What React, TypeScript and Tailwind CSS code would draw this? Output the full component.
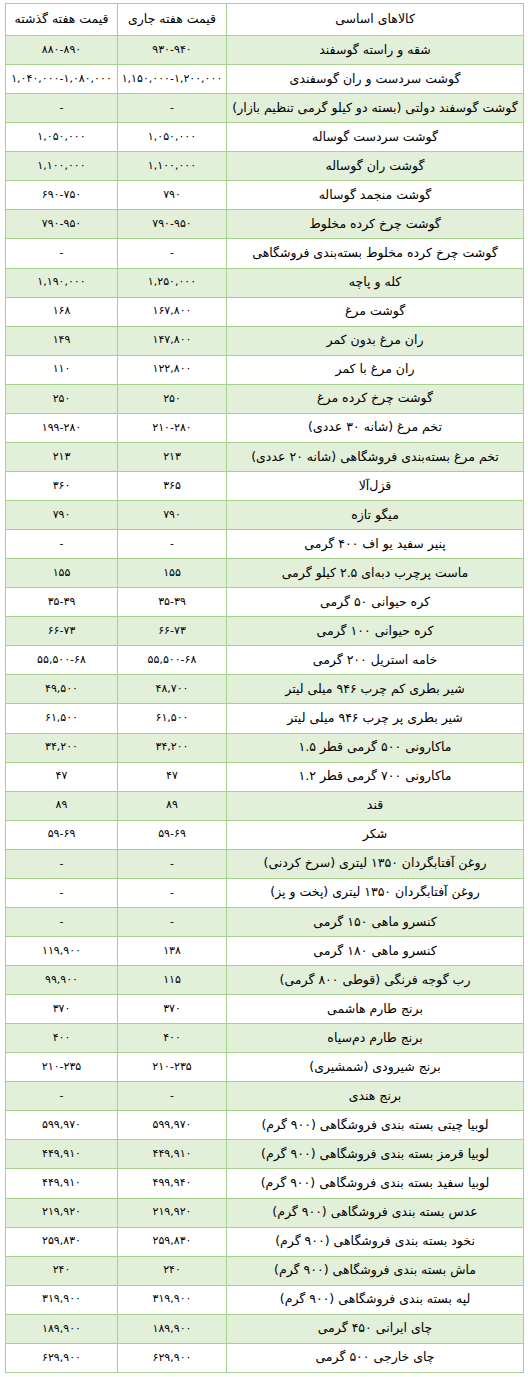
import React from "react";

const rows: [string, string, string][] = [
  ["شقه و راسته گوسفند", "۹۳۰-۹۴۰", "۸۸۰-۸۹۰"],
  ["گوشت سردست و ران گوسفندی", "۱,۱۵۰,۰۰۰-۱,۲۰۰,۰۰۰", "۱,۰۴۰,۰۰۰-۱,۰۸۰,۰۰۰"],
  ["گوشت گوسفند دولتی (بسته دو کیلو گرمی تنظیم بازار)", "-", "-"],
  ["گوشت سردست گوساله", "۱,۰۵۰,۰۰۰", "۱,۰۵۰,۰۰۰"],
  ["گوشت ران گوساله", "۱,۱۰۰,۰۰۰", "۱,۱۰۰,۰۰۰"],
  ["گوشت منجمد گوساله", "۷۹۰", "۶۹۰-۷۵۰"],
  ["گوشت چرخ کرده مخلوط", "۷۹۰-۹۵۰", "۷۹۰-۹۵۰"],
  ["گوشت چرخ کرده مخلوط بسته‌بندی فروشگاهی", "-", "-"],
  ["کله و پاچه", "۱,۲۵۰,۰۰۰", "۱,۱۹۰,۰۰۰"],
  ["گوشت مرغ", "۱۶۷,۸۰۰", "۱۶۸"],
  ["ران مرغ بدون کمر", "۱۴۷,۸۰۰", "۱۴۹"],
  ["ران مرغ با کمر", "۱۲۲,۸۰۰", "۱۱۰"],
  ["گوشت چرخ کرده مرغ", "۲۵۰", "۲۵۰"],
  ["تخم مرغ (شانه ۳۰ عددی)", "۲۱۰-۲۸۰", "۱۹۹-۲۸۰"],
  ["تخم مرغ بسته‌بندی فروشگاهی (شانه ۲۰ عددی)", "۲۱۳", "۲۱۳"],
  ["قزل‌آلا", "۳۶۵", "۳۶۰"],
  ["میگو تازه", "۷۹۰", "۷۹۰"],
  ["پنیر سفید یو اف ۴۰۰ گرمی", "-", "-"],
  ["ماست پرچرب دبه‌ای ۲.۵ کیلو گرمی", "۱۵۵", "۱۵۵"],
  ["کره حیوانی ۵۰ گرمی", "۳۵-۳۹", "۳۵-۳۹"],
  ["کره حیوانی ۱۰۰ گرمی", "۶۶-۷۳", "۶۶-۷۳"],
  ["خامه استریل ۲۰۰ گرمی", "۵۵,۵۰۰-۶۸", "۵۵,۵۰۰-۶۸"],
  ["شیر بطری کم چرب ۹۴۶ میلی لیتر", "۴۸,۷۰۰", "۴۹,۵۰۰"],
  ["شیر بطری پر چرب ۹۴۶ میلی لیتر", "۶۱,۵۰۰", "۶۱,۵۰۰"],
  ["ماکارونی ۵۰۰ گرمی قطر ۱.۵", "۳۴,۲۰۰", "۳۴,۲۰۰"],
  ["ماکارونی ۷۰۰ گرمی قطر ۱.۲", "۴۷", "۴۷"],
  ["قند", "۸۹", "۸۹"],
  ["شکر", "۵۹-۶۹", "۵۹-۶۹"],
  ["روغن آفتابگردان ۱۳۵۰ لیتری (سرخ کردنی)", "-", "-"],
  ["روغن آفتابگردان ۱۳۵۰ لیتری (پخت و پز)", "-", "-"],
  ["کنسرو ماهی ۱۵۰ گرمی", "-", "-"],
  ["کنسرو ماهی ۱۸۰ گرمی", "۱۳۸", "۱۱۹,۹۰۰"],
  ["رب گوجه فرنگی (قوطی ۸۰۰ گرمی)", "۱۱۵", "۹۹,۹۰۰"],
  ["برنج طارم هاشمی", "۳۷۰", "۳۷۰"],
  ["برنج طارم دم‌سیاه", "۴۰۰", "۴۰۰"],
  ["برنج شیرودی (شمشیری)", "۲۱۰-۲۳۵", "۲۱۰-۲۳۵"],
  ["برنج هندی", "-", "-"],
  ["لوبیا چیتی بسته بندی فروشگاهی (۹۰۰ گرم)", "۵۹۹,۹۷۰", "۵۹۹,۹۷۰"],
  ["لوبیا قرمز بسته بندی فروشگاهی (۹۰۰ گرم)", "۴۴۹,۹۱۰", "۴۴۹,۹۱۰"],
  ["لوبیا سفید بسته بندی فروشگاهی (۹۰۰ گرم)", "۴۹۹,۹۴۰", "۴۴۹,۹۱۰"],
  ["عدس بسته بندی فروشگاهی (۹۰۰ گرم)", "۲۱۹,۹۲۰", "۲۱۹,۹۲۰"],
  ["نخود بسته بندی فروشگاهی (۹۰۰ گرم)", "۲۵۹,۸۳۰", "۲۵۹,۸۳۰"],
  ["ماش بسته بندی فروشگاهی (۹۰۰ گرم)", "۲۴۰", "۲۴۰"],
  ["لپه بسته بندی فروشگاهی (۹۰۰ گرم)", "۳۱۹,۹۰۰", "۳۱۹,۹۰۰"],
  ["چای ایرانی ۴۵۰ گرمی", "۱۸۹,۹۰۰", "۱۸۹,۹۰۰"],
  ["چای خارجی ۵۰۰ گرمی", "۶۲۹,۹۰۰", "۶۲۹,۹۰۰"],
];

export default function App() {
  return (
    <div
      className="bg-white min-h-[1377px] pt-[3px] pl-[5px] text-black"
      style={{ fontFamily: '"DejaVu Sans", "Noto Sans", sans-serif' }}
    >
      <table
        dir="rtl"
        className="w-[518px] table-fixed border-collapse border border-[#a8d08d] text-[12.5px]"
      >
        <colgroup>
          <col className="w-[297px]" />
          <col className="w-[109px]" />
          <col className="w-[112px]" />
        </colgroup>
        <thead>
          <tr className="h-[32px] bg-white">
            <th className="border border-[#a8d08d] font-normal text-center p-0">کالاهای اساسی</th>
            <th className="border border-[#a8d08d] font-normal text-center p-0">قیمت هفته جاری</th>
            <th className="border border-[#a8d08d] font-normal text-center p-0">قیمت هفته گذشته</th>
          </tr>
        </thead>
        <tbody>
          {rows.map((r, i) => (
            <tr
              key={i}
              className={i % 2 === 0 ? "h-[29.07px] bg-[#e2efd9]" : "h-[29.07px] bg-white"}
            >
              <td className="border border-[#a8d08d] text-center p-0 whitespace-nowrap">{r[0]}</td>
              <td className="border border-[#a8d08d] text-center p-0 text-[11px] whitespace-nowrap">
                <span dir="ltr">{r[1]}</span>
              </td>
              <td className="border border-[#a8d08d] text-center p-0 text-[11px] whitespace-nowrap">
                <span dir="ltr">{r[2]}</span>
              </td>
            </tr>
          ))}
        </tbody>
      </table>
    </div>
  );
}
